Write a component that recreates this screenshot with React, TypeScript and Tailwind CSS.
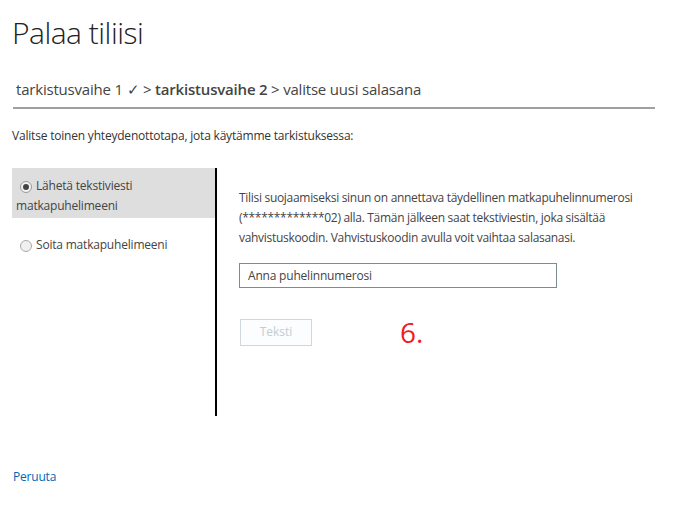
import React from "react";

const font = { fontFamily: '"Open Sans", "Noto Sans", sans-serif' };

export default function App() {
  return (
    <div className="w-[698px] h-[515px] bg-white text-[#333] overflow-hidden" style={font}>
      <div className="pl-[12px] pr-[43px]">
        <h1 className="pt-[13px] text-[30px] leading-[40px] font-light text-[#222] tracking-[-0.5px]">Palaa tiliisi</h1>
        <div className="mt-[26px] pl-[4px] text-[15px] leading-[20px] text-[#444] tracking-[-0.2px]">
          tarkistusvaihe 1 ✓ &gt; <span className="font-semibold">tarkistusvaihe 2</span> &gt; valitse uusi salasana
        </div>
        <div className="mt-[8px] ml-[1px] h-[2px] bg-[#a0a0a0]" />
        <p className="mt-[19px] text-[12px] leading-[16px] text-[#333] tracking-[-0.2px]">
          Valitse toinen yhteydenottotapa, jota käytämme tarkistuksessa:
        </p>
        <div className="mt-[24px] flex h-[248px]">
          <div className="w-[203px] shrink-0 flex flex-col text-[12px] leading-[20px] text-[#444] tracking-[-0.2px]">
            <label className="bg-[#dedede] pl-[4px] pt-[8px] pb-[5px] h-[50px]">
              <span className="inline-flex items-center align-middle mr-[4px] ml-[4px] w-[12px] h-[12px] rounded-full border border-[#999] bg-[#f4f4f4]">
                <span className="m-auto w-[6px] h-[6px] rounded-full bg-[#444]" />
              </span>
              Lähetä tekstiviesti matkapuhelimeeni
            </label>
            <label className="pl-[8px] pt-[17px]">
              <span className="inline-block align-middle mr-[4px] w-[12px] h-[12px] rounded-full border border-[#aaa] bg-[#f0f0f0]" />
              Soita matkapuhelimeeni
            </label>
          </div>
          <div className="w-[2px] shrink-0 bg-black" />
          <div className="flex-1 pl-[22px] pt-[20px]">
            <p className="w-[410px] text-[12px] leading-[20px] text-[#444] tracking-[-0.3px]">
              Tilisi suojaamiseksi sinun on annettava täydellinen matkapuhelinnumerosi (*************02) alla. Tämän jälkeen saat tekstiviestin, joka sisältää vahvistuskoodin. Vahvistuskoodin avulla voit vaihtaa salasanasi.
            </p>
            <input
              className="mt-[15px] block w-[318px] h-[25px] border border-[#7d8c8c] px-[8px] text-[12px] text-[#333] placeholder:text-[#444] outline-none tracking-[-0.2px]"
              style={font}
              placeholder="Anna puhelinnumerosi"
            />
            <div className="mt-[29px] flex items-center">
              <button
                disabled
                className="ml-[1px] w-[72px] h-[27px] border border-[#cfd7dc] bg-[#fbfdff] text-[12px] text-[#c4ccd2]"
                style={font}
              >
                Teksti
              </button>
              <span className="ml-[88px] text-[28px] leading-[30px] text-[#ee1c24]">6.</span>
            </div>
          </div>
        </div>
        <a className="block mt-[52px] ml-[1px] text-[12px] text-[#0067b8] tracking-[-0.2px]" href="#">Peruuta</a>
      </div>
    </div>
  );
}
